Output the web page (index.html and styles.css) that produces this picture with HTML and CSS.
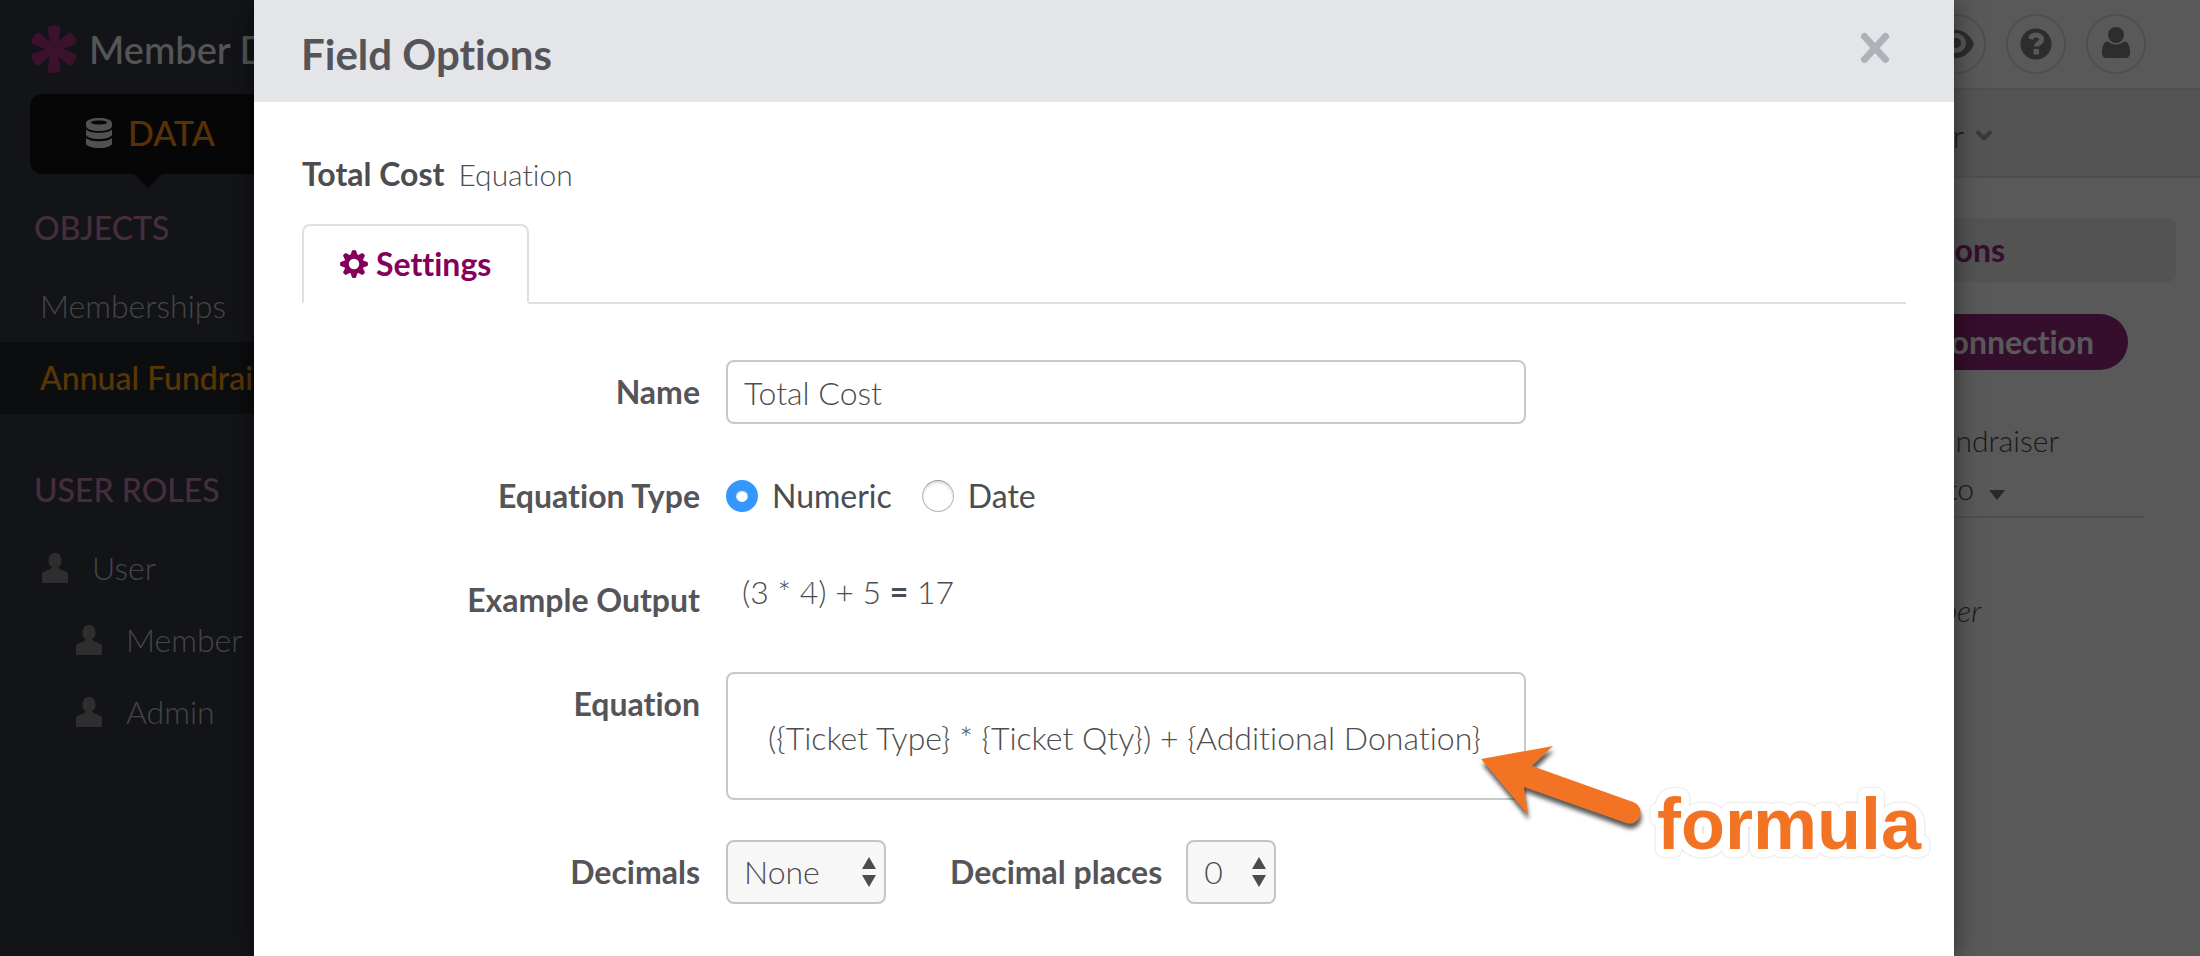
FILE: index.html
```html
<!DOCTYPE html>
<html lang="en">
<head>
<meta charset="utf-8">
<title>Field Options</title>
<link rel="stylesheet" href="styles.css">
</head>
<body>
<svg class="sprite" aria-hidden="true">
  <symbol id="bust" viewBox="0 0 26 30"><path d="M13 0c4 0 6.500 3 6.500 7.500 0 3.500-1.400 6-3.500 7.300 2 1.700 6 2.700 8.500 4.200 1.200.8 1.500 1.600 1.500 3V28.500c0 1-.5 1.500-1.500 1.500h-23C.5 30 0 29.500 0 28.500V22c0-1.400.3-2.200 1.500-3 2.500-1.500 6.500-2.500 8.500-4.200C7.900 13.500 6.500 11 6.500 7.500 6.500 3 9 0 13 0z"/></symbol>
</svg>
<div class="app">
  <nav class="sidebar">
    <div class="brand">
      <svg width="46" height="50" viewBox="0 0 46 50" aria-hidden="true"><g id="arms"><path id="arm" d="M20 25L16.500 4.500Q16.500 1 23 1T29.500 4.500L26 25Z"/><use href="#arm" transform="rotate(60 23 25)"/><use href="#arm" transform="rotate(120 23 25)"/></g><use href="#arms" transform="rotate(180 23 25)"/></svg>
      <span>Member Database</span>
    </div>
    <a class="data-tab" href="#data">
      <svg width="26" height="30" viewBox="0 0 26 30" aria-hidden="true"><path fill-rule="evenodd" d="M13 0c7 0 13 2 13 5v3c0 3-6 5-13 5S0 11 0 8V5c0-3 6-5 13-5zm0 2.500C8.500 2.500 5 3.300 5 4.500s3.500 2 8 2 8-.8 8-2-3.500-2-8-2z"/><path d="M0 11.500c2 2 7 3.300 13 3.300s11-1.300 13-3.300v5c0 2.700-6 4.500-13 4.500S0 19.200 0 16.500zM0 20c2 2 7 3.300 13 3.300S24 22 26 20v5.500c0 2.700-6 4.500-13 4.500S0 28.200 0 25.500z"/></svg>
      <span>DATA</span>
    </a>
    <h2 class="nav-title">OBJECTS</h2>
    <a class="nav-row" href="#memberships">Memberships</a>
    <a class="nav-row active" href="#fundraiser">Annual Fundraiser</a>
    <h2 class="nav-title roles-title">USER ROLES</h2>
    <a class="nav-row" href="#user"><svg width="26" height="30" aria-hidden="true"><use href="#bust"/></svg>User</a>
    <a class="nav-row nested" href="#member"><svg width="26" height="30" aria-hidden="true"><use href="#bust"/></svg>Member</a>
    <a class="nav-row nested" href="#admin"><svg width="26" height="30" aria-hidden="true"><use href="#bust"/></svg>Admin</a>
  </nav>
  <main class="main">
    <header class="topbar">
      <button class="round" aria-label="Preview"><svg width="40" height="32" viewBox="0 0 40 32"><path fill-rule="evenodd" d="M20 2c8 0 15 6 18 14-3 8-10 14-18 14S5 24 2 16C5 8 12 2 20 2zm0 3a10 10 0 100 20 10 10 0 000-20z"/><circle cx="20" cy="15" r="5"/></svg></button>
      <button class="round" aria-label="Help"><svg width="32" height="32" viewBox="0 0 32 32"><circle cx="16" cy="16" r="15.500"/><path class="cut" d="M10.500 11c.8-2.700 2.700-4 5.700-4 3.200 0 5.300 1.700 5.300 4.500 0 3.600-5 3.800-5 7"/><rect class="dot" x="13.500" y="21" width="5.500" height="5.500"/></svg></button>
      <button class="round" aria-label="Account"><svg width="30" height="34" viewBox="0 0 30 34"><circle cx="15" cy="8" r="8"/><path d="M7 14.500c2 2 5 3 8 3s6-1 8-3c4 .3 6 4 6 10.500 0 4-1.500 6-5 6H6c-3.500 0-5-2-5-6 0-6.500 2-10.200 6-10.500z"/></svg></button>
    </header>
    <div class="subbar"><span>Builder</span><svg width="16" height="12" viewBox="0 0 16 12" aria-hidden="true"><path d="M2 2.500l6 6 6-6"/></svg></div>
    <section class="side-panel">
      <h2 class="panel-title">Connections</h2>
      <button class="pill">Add Connection</button>
      <div class="connection">
        <span class="object">Annual Fundraiser</span>
        <span class="relation">connects to<svg width="18" height="10" viewBox="0 0 18 10" aria-hidden="true"><path d="M1 0h16L9.500 9.500h-1z"/></svg></span>
      </div>
      <em class="target">Member</em>
    </section>
  </main>
</div>
<div class="overlay">
  <div class="dialog" role="dialog" aria-labelledby="dialog-title">
    <header class="dialog-head">
      <h1 id="dialog-title">Field Options</h1>
      <button class="close" aria-label="Close"><svg width="30" height="32" viewBox="0 0 30 32"><path d="M4.500 4.500l21 23M25.500 4.500l-21 23"/></svg></button>
    </header>
    <div class="dialog-body">
      <p class="field-name"><strong>Total Cost</strong><span>Equation</span></p>
      <div class="tabs" role="tablist">
        <button class="tab" role="tab" aria-selected="true">
          <svg width="28" height="28" viewBox="0 0 28 28" aria-hidden="true"><defs><path id="tooth" d="M10.500 5L12 .5Q14 -.5 16 .5L17.500 5V23L16 27.500Q14 28.500 12 27.500L10.500 23Z"/></defs><mask id="hub"><rect width="28" height="28" fill="#fff"/><circle cx="14" cy="14" r="5.200" fill="#000"/></mask><g mask="url(#hub)"><circle cx="14" cy="14" r="10"/><use href="#tooth"/><use href="#tooth" transform="rotate(45 14 14)"/><use href="#tooth" transform="rotate(90 14 14)"/><use href="#tooth" transform="rotate(135 14 14)"/></g></svg>Settings</button>
      </div>
      <form class="form">
        <label class="label" for="name">Name</label>
        <input class="box" id="name" type="text" value="Total Cost">

        <span class="label" id="type-label">Equation Type</span>
        <div class="radios" role="radiogroup" aria-labelledby="type-label">
          <label><input type="radio" name="type" checked>Numeric</label>
          <label><input type="radio" name="type">Date</label>
        </div>

        <span class="label">Example Output</span>
        <output class="example">(3 * 4) + 5 <b>=</b> 17</output>

        <label class="label" for="equation">Equation</label>
        <div class="equation">
          <textarea class="box" id="equation" spellcheck="false">({Ticket Type} * {Ticket Qty}) + {Additional Donation}</textarea>
          <svg class="callout" width="470" height="140" viewBox="0 0 470 140">
            <path class="arrow" d="M11 23L83 10 62 30 163 66A11 11 0 0 1 156 87L54 51 58 79Z"/>
            <text x="187" y="113">formula</text>
          </svg>
        </div>

        <label class="label" for="decimals">Decimals</label>
        <div class="selects">
          <span class="select"><select class="box" id="decimals"><option>None</option></select><svg width="14" height="30" viewBox="0 0 14 30" aria-hidden="true"><path d="M7 0l7 12H0zM7 30L0 18h14z"/></svg></span>
          <label class="places" for="places">Decimal places</label>
          <span class="select small"><select class="box" id="places"><option>0</option></select><svg width="14" height="30" viewBox="0 0 14 30" aria-hidden="true"><path d="M7 0l7 12H0zM7 30L0 18h14z"/></svg></span>
        </div>
      </form>
    </div>
  </div>
</div>
</body>
</html>
```
FILE: styles.css
```css
* { box-sizing: border-box; }
body {
  margin: 0;
  height: 100vh;
  overflow: hidden;
  font: 300 32px/40px Lato, "Liberation Sans", sans-serif;
  font-variant-ligatures: none;
  color: #4c4c51;
  background: #fff;
}
h1, h2, p { margin: 0; }
a { color: inherit; text-decoration: none; }
button, input, select, textarea { font: inherit; font-variant-ligatures: none; color: inherit; }
button { border: 0; padding: 0; background: none; }
strong, b { font-weight: 700; }
svg { display: block; flex: none; fill: currentColor; }
.sprite { position: absolute; width: 0; height: 0; }

.app { display: flex; min-height: 100vh; }
.sidebar {
  width: 296px;
  flex: none;
  background: #343a46;
  color: #c4c4c4;
  white-space: nowrap;
}
.brand {
  display: flex;
  align-items: center;
  gap: 12px;
  height: 94px;
  padding: 4px 0 0 31px;
  font-size: 38px;
  font-weight: 500;
  color: #f4f4f4;
  overflow: hidden;
}
.brand svg { color: #a8327c; }
.data-tab {
  position: relative;
  display: flex;
  align-items: center;
  gap: 16px;
  height: 80px;
  margin-left: 30px;
  padding: 0 0 2px 56px;
  border-radius: 12px;
  background: #121212;
  font-size: 34px;
  font-weight: 500;
  color: #ff8c12;
}
.data-tab svg { color: #ece6ea; }
.data-tab::after {
  content: "";
  position: absolute;
  top: 100%;
  left: 104px;
  border: 14px solid transparent;
  border-top-color: #121212;
  border-bottom: 0;
}
.nav-title {
  height: 96px;
  padding: 34px 0 0 34px;
  font-size: 32px;
  font-weight: 500;
  color: #c880ac;
}
.roles-title { height: 118px; padding-top: 56px; }
.nav-row {
  display: flex;
  align-items: center;
  gap: 24px;
  height: 72px;
  padding-left: 40px;
}
.nav-row svg { color: #858585; margin-left: 2px; }
.nav-row.nested { padding-left: 74px; }
.nav-row.active {
  background: #24262a;
  color: #ff9c12;
  font-weight: 500;
}

.main { flex: 1; min-width: 0; }
.topbar {
  display: flex;
  justify-content: flex-end;
  align-items: center;
  gap: 20px;
  height: 90px;
  padding-right: 54px;
  border-bottom: 2px solid #e2e2e2;
}
.round {
  display: grid;
  place-items: center;
  width: 60px;
  height: 60px;
  border: 2px solid #e2e2e2;
  border-radius: 50%;
  color: #7e8084;
}
.round .cut { fill: none; stroke: #fff; stroke-width: 5; }
.round .dot { fill: #fff; }
.subbar {
  display: flex;
  justify-content: flex-end;
  align-items: center;
  gap: 12px;
  height: 88px;
  padding: 6px 208px 0 0;
  border-bottom: 2px solid #e2e2e2;
  background: #f1f1f1;
}
.subbar svg { fill: none; stroke: #a5a5ab; stroke-width: 4; stroke-linecap: round; stroke-linejoin: round; }
.side-panel {
  display: flex;
  flex-direction: column;
  align-items: flex-end;
  width: 400px;
  margin-left: auto;
  padding: 40px 24px 0 0;
  white-space: nowrap;
}
.panel-title {
  width: 100%;
  height: 64px;
  padding-right: 171px;
  border-radius: 8px;
  background: #eee;
  color: #95287e;
  font-size: 32px;
  line-height: 64px;
  text-align: right;
}
.pill {
  height: 56px;
  margin: 32px 48px 0 0;
  padding: 0 34px;
  border-radius: 28px;
  background: #95287e;
  color: #fff;
  font-weight: 700;
}
.connection {
  display: flex;
  flex-direction: column;
  align-items: flex-end;
  gap: 8px;
  width: 300px;
  margin: 50px 32px 0 0;
  padding-bottom: 8px;
  border-bottom: 2px solid #e2e2e2;
}
.object { margin-right: 85px; font-size: 30px; }
.relation { display: flex; align-items: baseline; gap: 14px; margin-right: 138px; font-size: 30px; }
.relation svg { margin-bottom: 4px; color: #77777c; }
.target { margin: 72px 195px 0 0; font-size: 30px; }

.overlay {
  position: absolute;
  inset: 0;
  padding: 0 246px 0 254px;
  background: rgba(0, 0, 0, .65);
}
.dialog {
  min-height: 100%;
  background: #fff;
  box-shadow: 0 0 24px rgba(0, 0, 0, .5);
}
.dialog-head {
  display: flex;
  justify-content: space-between;
  align-items: center;
  height: 102px;
  padding: 6px 64px 0 47px;
  background: #e4e5e9;
}
.dialog-head h1 { font-size: 42px; line-height: 48px; color: #545459; }
.close { padding-bottom: 12px; }
.close svg { stroke: #b0b1b8; stroke-width: 7; stroke-linecap: round; }
.dialog-body { padding: 52px 48px 40px; }
.field-name { display: flex; align-items: baseline; gap: 14px; }
.field-name span { font-size: 30px; }
.tabs {
  display: flex;
  height: 80px;
  margin-top: 30px;
  border-bottom: 2px solid #e0dfe4;
}
.tab {
  display: flex;
  align-items: center;
  gap: 8px;
  height: 80px;
  padding: 0 36px;
  border: 2px solid #e0dfe4;
  border-bottom-color: #fff;
  border-radius: 8px 8px 0 0;
  background: #fff;
  color: #85005b;
  font-weight: 700;
}
.form {
  display: grid;
  grid-template-columns: 1fr 2fr 356px;
  gap: 40px 24px;
  margin-top: 56px;
}
.form > * { grid-column: 2; }
.form > .label { grid-column: 1; padding-right: 2px; text-align: right; }
.label, .places { font-weight: 700; line-height: 64px; color: #545459; }
.box {
  display: block;
  width: 100%;
  height: 64px;
  padding: 0 16px;
  border: 2px solid #c8c8c8;
  border-radius: 8px;
  background: #fff;
  outline: 0;
}
.radios { display: flex; align-items: center; gap: 30px; font-weight: 400; }
.radios label { display: flex; align-items: center; gap: 14px; }
.radios input {
  appearance: none;
  width: 32px;
  height: 32px;
  margin: 0;
  border: 1px solid #b8b8b8;
  border-top-color: #999;
  border-radius: 50%;
  background: #fff;
  box-shadow: inset 0 2px 3px rgba(0, 0, 0, .15);
}
.radios input:checked {
  border: 10px solid #3397ff;
  box-shadow: 0 1px 1px #1d7fe8 inset;
}
.example { padding: 0 16px; line-height: 48px; }
.equation { position: relative; }
textarea.box {
  height: 128px;
  padding: 40px;
  line-height: 48px;
  overflow: hidden;
  resize: none;
}
.callout { position: absolute; top: 64px; left: calc(100% - 56px); overflow: visible; }
.callout .arrow { fill: #f37324; filter: drop-shadow(1px 5px 2px rgba(0, 0, 0, .65)); }
.callout text {
  fill: #f37324;
  stroke: #fff;
  stroke-width: 16;
  stroke-linejoin: round;
  paint-order: stroke;
  font: 700 72px "Liberation Sans", Arial, sans-serif;
  filter: drop-shadow(0 0 1px rgba(0, 0, 0, .2));
}
.selects { display: flex; align-items: center; }
.select { position: relative; width: 160px; }
.select.small { width: 90px; }
.select .box { appearance: none; border-color: #c4c2cf; background: #f7f7f7; }
.select svg { position: absolute; top: 17px; right: 10px; pointer-events: none; }
.places { margin: 0 24px 0 64px; }
```
